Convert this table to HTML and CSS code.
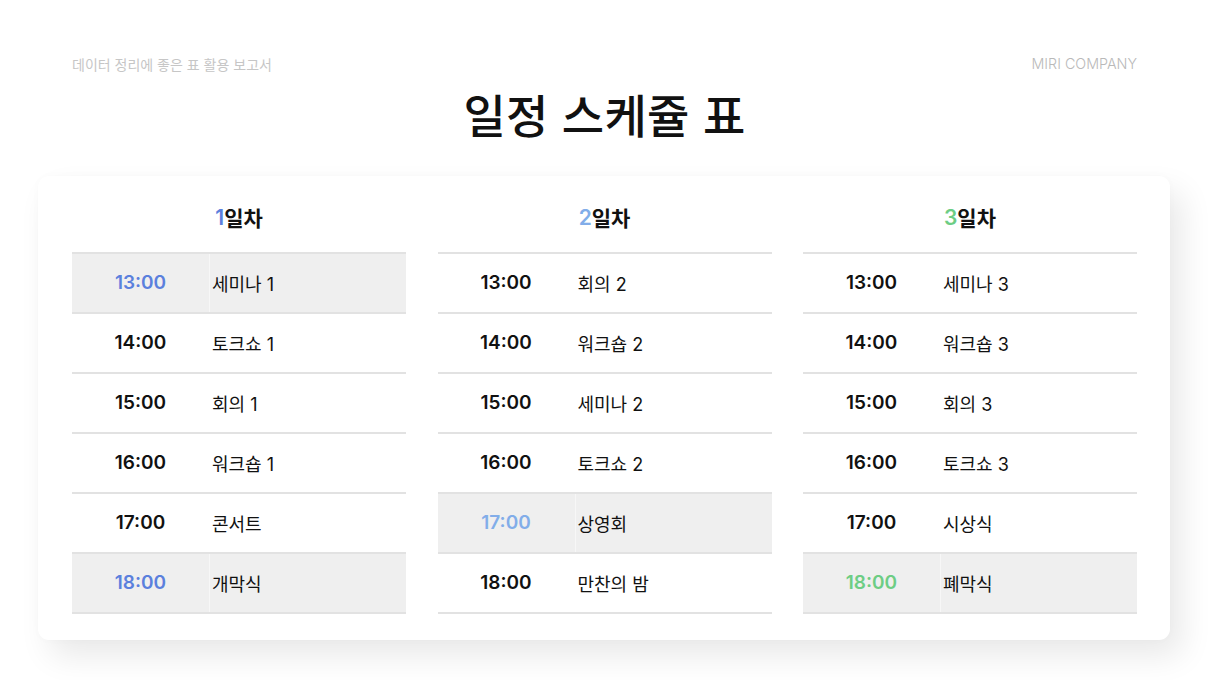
FILE: index.html
```html
<!DOCTYPE html>
<html lang="ko">
<head>
<meta charset="utf-8">
<link rel="stylesheet" href="styles.css">
</head>
<body>
<div class="page">
  <header class="topbar">
    <span class="subtitle">데이터 정리에 좋은 표 활용 보고서</span>
    <span class="company">MIRI COMPANY</span>
  </header>
  <h1 class="title">일정 스케쥴 표</h1>
  <section class="card">
    <div class="day day1">
      <h2 class="day-head"><span class="num">1</span>일차</h2>
      <div class="rows">
        <div class="row hl"><span class="time">13:00</span><span class="name">세미나 1</span></div>
        <div class="row"><span class="time">14:00</span><span class="name">토크쇼 1</span></div>
        <div class="row"><span class="time">15:00</span><span class="name">회의 1</span></div>
        <div class="row"><span class="time">16:00</span><span class="name">워크숍 1</span></div>
        <div class="row"><span class="time">17:00</span><span class="name">콘서트</span></div>
        <div class="row hl"><span class="time">18:00</span><span class="name">개막식</span></div>
      </div>
    </div>
    <div class="day day2">
      <h2 class="day-head"><span class="num">2</span>일차</h2>
      <div class="rows">
        <div class="row"><span class="time">13:00</span><span class="name">회의 2</span></div>
        <div class="row"><span class="time">14:00</span><span class="name">워크숍 2</span></div>
        <div class="row"><span class="time">15:00</span><span class="name">세미나 2</span></div>
        <div class="row"><span class="time">16:00</span><span class="name">토크쇼 2</span></div>
        <div class="row hl"><span class="time">17:00</span><span class="name">상영회</span></div>
        <div class="row"><span class="time">18:00</span><span class="name">만찬의 밤</span></div>
      </div>
    </div>
    <div class="day day3">
      <h2 class="day-head"><span class="num">3</span>일차</h2>
      <div class="rows">
        <div class="row"><span class="time">13:00</span><span class="name">세미나 3</span></div>
        <div class="row"><span class="time">14:00</span><span class="name">워크숍 3</span></div>
        <div class="row"><span class="time">15:00</span><span class="name">회의 3</span></div>
        <div class="row"><span class="time">16:00</span><span class="name">토크쇼 3</span></div>
        <div class="row"><span class="time">17:00</span><span class="name">시상식</span></div>
        <div class="row hl"><span class="time">18:00</span><span class="name">폐막식</span></div>
      </div>
    </div>
  </section>
</div>
</body>
</html>
```

FILE: styles.css
```css
* { box-sizing: border-box; }
html, body { margin: 0; padding: 0; background: #ffffff; }
body {
  font-family: Inter, "Noto Sans CJK KR", "Noto Sans", sans-serif;
  color: #111;
  width: 1209px;
  height: 680px;
  overflow: hidden;
}
.page { padding-top: 56px; }
.topbar {
  display: flex;
  justify-content: space-between;
  padding: 0 72px;
  height: 16px;
  line-height: 16px;
  font-size: 14px;
}
.subtitle {
  color: #c6c6c6;
  font-family: "Noto Sans CJK KR", sans-serif;
  font-weight: 400;
}
.company {
  color: #b9b9b9;
  font-weight: 300;
  font-size: 14.3px;
}
.title {
  margin: 15px 0 0;
  text-align: center;
  font-family: "Noto Sans CJK KR", sans-serif;
  font-size: 46px;
  line-height: 52px;
  font-weight: 500;
  color: #111;
  letter-spacing: 0.3px;
}
.card {
  margin: 37px 39px 0 38px;
  height: 464px;
  background: #fff;
  border-radius: 11px;
  box-shadow: 12px 16px 32px rgba(0, 0, 0, 0.09), 0 0 8px rgba(0, 0, 0, 0.02);
  padding: 0 33px 0 34px;
  display: grid;
  grid-template-columns: 334px 334px 334px;
  column-gap: 31.5px;
}
.day-head {
  margin: 0;
  height: 76px;
  display: flex;
  align-items: center;
  justify-content: center;
  padding-top: 6px;
  font-family: Inter, "Noto Sans CJK KR", sans-serif;
  font-size: 21px;
  font-weight: 600;
  color: #111;
}
.rows { border-top: 2px solid #e2e2e2; }
.row {
  display: flex;
  height: 60px;
  border-bottom: 2px solid #e2e2e2;
  align-items: stretch;
}
.row.hl { background: #efefef; }
.time {
  width: 138px;
  display: flex;
  align-items: center;
  justify-content: center;
  padding-bottom: 1px;
  font-family: Inter, sans-serif;
  font-size: 19px;
  font-weight: 600;
  color: #111;
  border-right: 1px solid transparent;
}
.row.hl .time { border-right-color: #f7f7f7; }
.name {
  display: flex;
  align-items: center;
  padding-left: 2px;
  padding-bottom: 1px;
  font-family: Inter, "Noto Sans CJK KR", sans-serif;
  font-size: 18px;
  font-weight: 400;
  color: #111;
}
.day1 .num { color: #5b80dd; }
.day2 .num { color: #82ade9; }
.day3 .num { color: #6dcd84; }
.day1 .row.hl .time { color: #5b80dd; }
.day2 .row.hl .time { color: #82ade9; }
.day3 .row.hl .time { color: #6dcd84; }
```
